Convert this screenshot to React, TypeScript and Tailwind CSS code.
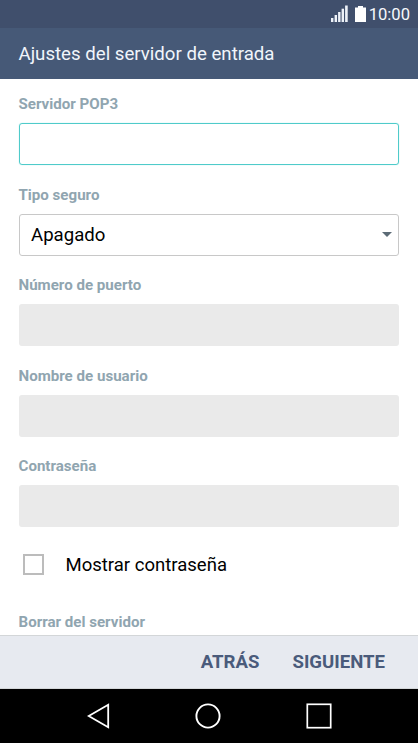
import { useState } from 'react';

function StatusBar() {
  return (
    <div className="h-7 shrink-0 bg-[#404f6c] flex items-center justify-end pr-[8px] text-[#f6f8fc]">
      <svg className="mb-px" width="18" height="17" viewBox="0 0 18 17" fill="#eef2f9">
        <rect x="0" y="13" width="2.4" height="4" />
        <rect x="3.6" y="10" width="2.4" height="7" />
        <rect x="7.1" y="7" width="2.4" height="10" />
        <rect x="10.6" y="3.7" width="2.4" height="13.3" />
        <rect x="14.1" y="0.5" width="2.6" height="16.5" />
      </svg>
      <svg className="ml-[6px]" width="11" height="16" viewBox="0 0 11 16" fill="#ffffff">
        <path d="M3 0h5v1.5h3V16H0V1.5h3z" />
      </svg>
      <span className="ml-[3px] pt-[2px] text-[16.6px] leading-[26px]">10:00</span>
    </div>
  );
}

function Label({ text }: { text: string }) {
  return <p className="h-5 text-[15.1px] leading-5 font-bold text-[#90a5b0]">{text}</p>;
}

function DisabledField({ label }: { label: string }) {
  return (
    <div className="h-[90.6px] shrink-0">
      <Label text={label} />
      <input
        type="text"
        disabled
        aria-label={label}
        className="mt-[9px] block h-[42px] w-full rounded-[3px] bg-[#eaeaea] px-3"
      />
    </div>
  );
}

export default function App() {
  const [servidor, setServidor] = useState('');
  const [mostrar, setMostrar] = useState(false);

  return (
    <div className="w-full h-screen flex flex-col overflow-hidden bg-white font-['Roboto',sans-serif]">
      <StatusBar />
      <div className="h-[51px] shrink-0 bg-[#465977] px-[18.5px] pt-[2px] flex items-center">
        <h1 className="text-[18.65px] text-[#f1f5fb]">Ajustes del servidor de entrada</h1>
      </div>

      <div className="flex-1 min-h-0 overflow-hidden pl-[18.5px] pr-[19px] pt-[15px] flex flex-col">
        <div className="h-[90.6px] shrink-0">
          <Label text="Servidor POP3" />
          <input
            type="text"
            value={servidor}
            onChange={(e) => setServidor(e.target.value)}
            aria-label="Servidor POP3"
            className="mt-[9px] block h-[42px] w-full rounded-[3px] border border-[#4fcbca] px-3 text-lg shadow-[0_0_1px_#7fe0de] outline-none"
          />
        </div>

        <div className="h-[90.6px] shrink-0">
          <Label text="Tipo seguro" />
          <button className="mt-[9px] flex h-[42px] w-full items-center justify-between rounded-[3px] border border-[#c8c8c8] pl-[11.5px] pr-[6.5px] text-[18.6px] text-black">
            <span className="pt-[2.5px]">Apagado</span>
            <svg width="10" height="5" viewBox="0 0 10 5" fill="#5c6b76">
              <path d="M0 0h10L5 5z" />
            </svg>
          </button>
        </div>

        <DisabledField label="Número de puerto" />
        <DisabledField label="Nombre de usuario" />
        <DisabledField label="Contraseña" />

        {/* Casilla para mostrar la contraseña */}
        <label className="mt-[8px] h-5 shrink-0 flex items-center pl-[4px]">
          <input
            type="checkbox"
            checked={mostrar}
            onChange={(e) => setMostrar(e.target.checked)}
            className="size-[21px] appearance-none border-2 border-[#bcbcbc] checked:bg-[#465977]"
          />
          <span className="ml-[22px] pt-px text-[18.55px] text-black">Mostrar contraseña</span>
        </label>

        <div className="mt-[37px] shrink-0">
          <Label text="Borrar del servidor" />
        </div>
      </div>

      <div className="h-[54px] shrink-0 border-y border-[#d3d6d8] bg-[#e7eaf0] flex items-center justify-end gap-[33px] pt-[2px] pr-[33px] text-[18.6px] font-bold text-[#4a5b7b]">
        <button>ATRÁS</button>
        <button>SIGUIENTE</button>
      </div>

      <div className="h-[54px] shrink-0 bg-black flex items-center justify-between pl-[87px] pr-[86px]">
        <svg width="23" height="26" viewBox="0 0 23 26" fill="none" stroke="#ffffff" strokeWidth="1.8">
          <path d="M21.2 1.7v22.6L1.7 13z" />
        </svg>
        <svg width="26" height="26" viewBox="0 0 26 26" fill="none" stroke="#ffffff" strokeWidth="1.9">
          <circle cx="13" cy="13" r="11.6" />
        </svg>
        <svg width="26" height="26" viewBox="0 0 26 26" fill="none" stroke="#ffffff" strokeWidth="1.7">
          <rect x="1.3" y="1.3" width="23.4" height="23.4" />
        </svg>
      </div>
    </div>
  );
}
